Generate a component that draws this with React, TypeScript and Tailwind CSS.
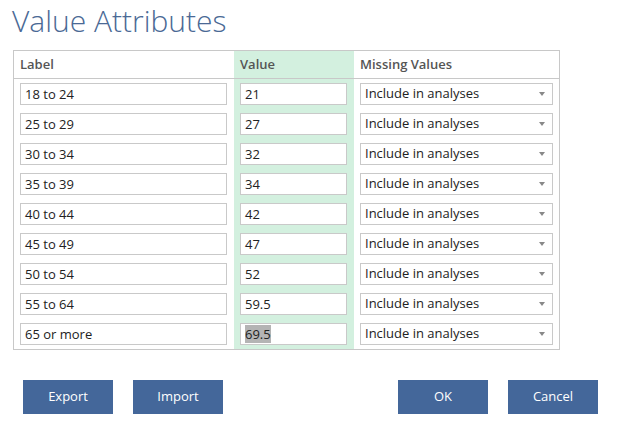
const rows: [string, string][] = [
  ['18 to 24', '21'],
  ['25 to 29', '27'],
  ['30 to 34', '32'],
  ['35 to 39', '34'],
  ['40 to 44', '42'],
  ['45 to 49', '47'],
  ['50 to 54', '52'],
  ['55 to 64', '59.5'],
  ['65 or more', '69.5'],
]

function Field({ children }: { children: React.ReactNode }) {
  return (
    <div className="h-[22px] w-full border border-[#c9c9c9] bg-white pl-[4px] text-[13px] leading-[20px] text-[#222]">
      {children}
    </div>
  )
}

function Select() {
  return (
    <div className="flex h-[22px] w-full items-center justify-between border border-[#c9c9c9] bg-white pl-[4px] pr-[7px] text-[13px] text-[#222]">
      <span>Include in analyses</span>
      <svg width="6" height="4" viewBox="0 0 6 4">
        <path d="M0 0 L6 0 L3 4 Z" fill="#888" />
      </svg>
    </div>
  )
}

export default function App() {
  return (
    <div
      className="h-[435px] w-[619px] bg-white"
      style={{ fontFamily: '"Open Sans", "Noto Sans", sans-serif' }}
    >
      <h1 className="pl-[12px] pt-[1px] text-[30px] font-light leading-[40px] text-[#4a6995]">
        Value Attributes
      </h1>

      <div className="ml-[13px] mt-[9px] w-[547px] border border-[#c8c8c8]">
        <div className="grid grid-cols-[220px_120px_205px] border-b border-[#c8c8c8] text-[13px] font-semibold text-[#555]">
          <div className="flex h-[27px] items-center pl-[6px]">Label</div>
          <div className="flex h-[27px] items-center bg-[#d3f0df] pl-[6px]">Value</div>
          <div className="flex h-[27px] items-center pl-[6px]">Missing Values</div>
        </div>
        {rows.map(([label, value], i) => (
          <div key={label} className="grid grid-cols-[220px_120px_205px]">
            <div className="flex h-[30px] items-center pl-[6px] pr-[7px]">
              <Field>{label}</Field>
            </div>
            <div className="flex h-[30px] items-center bg-[#d3f0df] pl-[6px] pr-[7px]">
              <Field>
                {i === rows.length - 1 ? (
                  <span className="bg-[#b4b4b4]">{value}</span>
                ) : (
                  value
                )}
              </Field>
            </div>
            <div className="flex h-[30px] items-center pl-[6px] pr-[6px]">
              <Select />
            </div>
          </div>
        ))}
      </div>

      <div className="mt-[30px] flex px-[23px] text-[13px] text-white">
        <button className="h-[34px] w-[90px] bg-[#44679a]">Export</button>
        <button className="ml-[20px] h-[34px] w-[90px] bg-[#44679a]">Import</button>
        <button className="ml-auto h-[34px] w-[90px] bg-[#44679a]">OK</button>
        <button className="ml-[20px] mr-[-2px] h-[34px] w-[90px] bg-[#44679a]">Cancel</button>
      </div>
    </div>
  )
}
